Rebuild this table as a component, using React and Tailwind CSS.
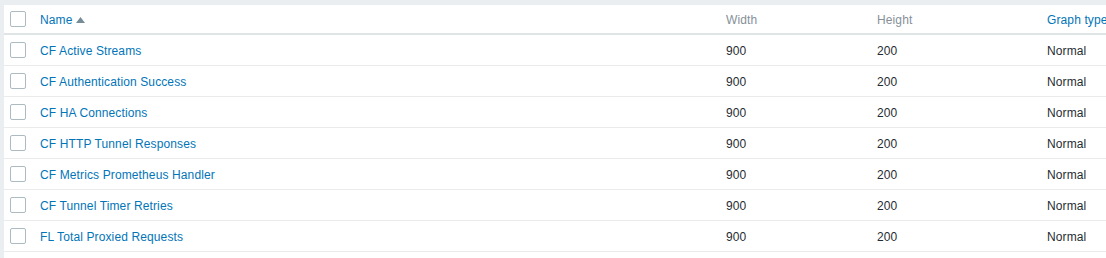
import React from "react";

const rows = [
  "CF Active Streams",
  "CF Authentication Success",
  "CF HA Connections",
  "CF HTTP Tunnel Responses",
  "CF Metrics Prometheus Handler",
  "CF Tunnel Timer Retries",
  "FL Total Proxied Requests",
];

function Checkbox() {
  return <div className="h-4 w-4 rounded-[2px] border border-[#acbbc2] bg-white" />;
}

export default function App() {
  return (
    <main className="h-[258px] w-[1106px] overflow-hidden bg-[#ebeef0] pl-1 pt-[5px] font-['Arial','Liberation_Sans',sans-serif] text-[12px] tracking-[0.12px]">
      <div className="h-full w-[1200px] bg-white">
        {/* header */}
        <div className="flex h-[30px] items-center border-b-2 border-[#dfe4e7]">
          <div className="w-[36px] pl-[6px]">
            <Checkbox />
          </div>
          <div className="flex w-[686px] items-center pt-px text-[#0275b8]">
            Name
            <svg width="9" height="6" viewBox="0 0 9 6" className="ml-[3px]">
              <path d="M0 6 L4.5 0 L9 6 Z" fill="#768d99" />
            </svg>
          </div>
          <div className="w-[151px] pt-px text-[#869099]">Width</div>
          <div className="w-[170px] pt-px text-[#869099]">Height</div>
          <div className="pt-px text-[#0275b8]">Graph type</div>
        </div>
        {rows.map((name) => (
          <div key={name} className="flex h-[31px] items-center border-b border-[#ebebeb]">
            <div className="w-[36px] pl-[6px]">
              <Checkbox />
            </div>
            <div className="w-[686px] pt-[2px] text-[#0275b8]">{name}</div>
            <div className="w-[151px] pt-[2px] text-[#1f2c33]">900</div>
            <div className="w-[170px] pt-[2px] text-[#1f2c33]">200</div>
            <div className="pt-[2px] text-[#1f2c33]">Normal</div>
          </div>
        ))}
      </div>
    </main>
  );
}
